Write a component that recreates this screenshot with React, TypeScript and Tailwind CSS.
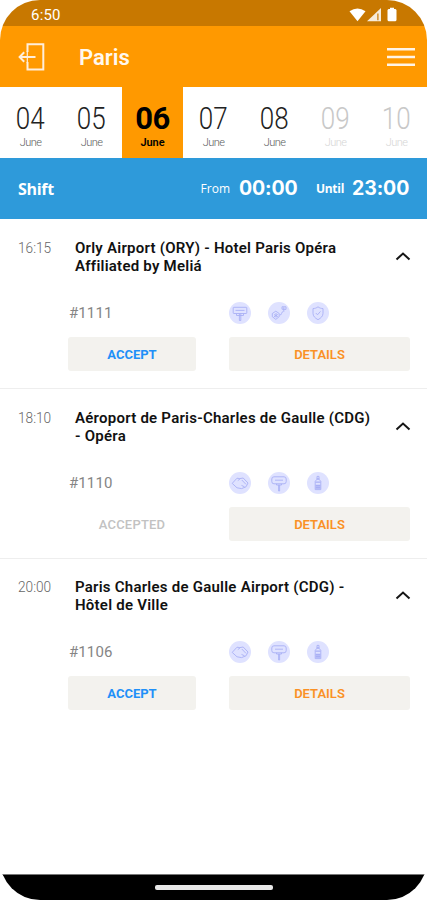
import type { ReactNode } from 'react';

type IconName = 'sign' | 'board' | 'route' | 'shield' | 'handshake' | 'bottle';

const glyphs: Record<IconName, ReactNode> = {
  sign: (
    <>
      <rect x="4.2" y="5.3" width="13.6" height="6.2" rx=".6" />
      <path d="M6.5 8.4h9M7.5 11.5v2h7v-2M10.4 11.5v7h1.4v-7" />
    </>
  ),
  board: (
    <>
      <rect x="3.8" y="4.8" width="14.4" height="7" rx="2.2" />
      <path d="M7 8.2h8M8.5 11.8v1.2h5v-1.2M10.6 13v6h1v-6" />
    </>
  ),
  route: (
    <>
      <path d="M4.3 11.5 7.8 9.2l3.4 2.3v3.2l-3.4 2.7-3.5-2.7zM6 12.5l3.8 2.2M6 14.8l3.8-2.4M8 11v4.5" />
      <path d="M11.8 13c2.8 0 .8-3 3.4-3.4M15.8 9.8V5.2M14 7.2V4.8h4v2.6z" />
    </>
  ),
  shield: (
    <>
      <path d="M11 4.8c1.5 1.2 3.1 1.7 5 1.8v4.7c0 2.8-2 4.8-5 6.4-3-1.6-5-3.6-5-6.4V6.6c1.9-.1 3.5-.6 5-1.8z" />
      <path d="m8.8 11 1.7 1.8 3-3.4" />
    </>
  ),
  handshake: (
    <>
      <path d="M3.2 11.4 8 6.2l2.8.4 3.4-.6 4.8 5-2 3.8-4.4 1.8-4.6-.8z" />
      <path d="m8.8 8.6 2.4-1.8M12.8 8l4.2 4.4M12.5 13.4l3 1.4" />
    </>
  ),
  bottle: (
    <>
      <path d="M10 4.4h2v2.8l1.8 2.2v8.2H8.2V9.4L10 7.2z" />
      <path d="M9.8 7h2.4M8.4 10.2h5.2M8.5 13.4h5M8.5 14.8h5M8.5 16.2h5" strokeWidth="1.3" />
    </>
  ),
};

function Badge({ name }: { name: IconName }) {
  return (
    <svg viewBox="0 0 22 22" className="size-[22px]" fill="none" stroke="#a9b0f5" strokeWidth=".9">
      <circle cx="11" cy="11" r="11" fill="#dfe2ff" stroke="none" />
      {glyphs[name]}
    </svg>
  );
}

function StatusBar() {
  return (
    <div className="flex h-[26px] items-center bg-[#c87800] pl-[31px] pr-[29px] text-white">
      <span className="pt-[4px] text-[15px] leading-[20px] tracking-[0.2px]">6:50</span>
      <svg viewBox="0 0 50 16" className="ml-auto mt-[3px] h-[16px] w-[50px]" fill="#fff">
        <path d="M1.5 4.2Q9.5-1.3 17.5 4.2L9.5 14.2z" />
        <path d="M19 14.2 33 1v13.2z" opacity=".85" />
        <path d="M29.3 6.5h1.2v6.7h-1.2z" fill="#c87800" />
        <path d="M42 2V.8h4V2h1.5l1 1v10.2l-1 1h-7l-1-1V3l1-1z" />
      </svg>
    </div>
  );
}

function Header() {
  return (
    <header className="flex h-[61px] items-center bg-[#ff9900] pl-[18px] pr-[12px]">
      <svg viewBox="0 0 28 30" className="mt-px h-[30px] w-[28px]" fill="none" stroke="#ffeedb" strokeWidth="2">
        <path d="M9.5 10V2.2H25.3v25.3H9.5V20" />
        <path d="M17.5 15H1.8M6.2 10.2 1.6 15l4.6 4.8" />
        <path d="M9.3 9v12" strokeWidth="1.2" />
      </svg>
      <h1 className="ml-[33px] mt-[2px] text-[22px] font-semibold leading-[28px] text-[#fff8ee]">Paris</h1>
      <svg viewBox="0 0 28 20" className="ml-auto h-[20px] w-[28px]" stroke="#fff4e6" strokeWidth="2.6">
        <path d="M0 2.3h28M0 10h28M0 17.7h28" />
      </svg>
    </header>
  );
}

const days = ['04', '05', '06', '07', '08', '09', '10'];

function dayStyle(index: number) {
  if (index === 2) return 'bg-[#ff9900] font-bold text-black';
  if (index > 4) return 'font-light text-[#c8c8c8]';
  return 'font-light text-[#222]';
}

function DateStrip() {
  return (
    <div className="grid h-[71px] grid-cols-7 bg-white">
      {days.map((day, i) => (
        <div key={day} className={`flex flex-col items-center pt-[14px] ${dayStyle(i)}`}>
          <span className={i === 2 ? 'text-[31px] leading-[35px] tracking-[-0.5px]' : 'scale-x-[0.84] text-[31px] leading-[35px]'}>{day}</span>
          <span className={i === 2 ? 'text-[11px] font-semibold leading-[14px] tracking-[-0.1px]' : 'text-[11px] leading-[14px] tracking-[-0.6px] opacity-75'}>June</span>
        </div>
      ))}
    </div>
  );
}

function ShiftBar() {
  return (
    <div className="flex h-[61px] items-center bg-[#2e9ada] pl-[18px] pr-[17px] font-['Open_Sans',sans-serif] text-white">
      <span className="text-[16px] font-bold tracking-[-0.3px]">Shift</span>
      <span className="ml-auto text-[12px] font-medium">From</span>
      <span className="ml-[9px] w-[59px] whitespace-nowrap font-['Inter',sans-serif] text-[19.5px] font-bold tracking-[-0.1px]">00:00</span>
      <span className="ml-[18px] w-[28px] whitespace-nowrap text-[12px] font-bold tracking-[-0.3px]">Until</span>
      <span className="ml-[8px] w-[58px] whitespace-nowrap font-['Inter',sans-serif] text-[19.5px] font-bold tracking-[-0.1px]">23:00</span>
    </div>
  );
}

interface Ride {
  time: string;
  lines: [string, string];
  id: string;
  accepted?: boolean;
  icons: IconName[];
}

const rides: Ride[] = [
  { time: '16:15', lines: ['Orly Airport (ORY) - Hotel Paris Opéra', 'Affiliated by Meliá'], id: '#1111', icons: ['sign', 'route', 'shield'] },
  { time: '18:10', lines: ['Aéroport de Paris-Charles de Gaulle (CDG)', '- Opéra'], id: '#1110', accepted: true, icons: ['handshake', 'board', 'bottle'] },
  { time: '20:00', lines: ['Paris Charles de Gaulle Airport (CDG) -', 'Hôtel de Ville'], id: '#1106', icons: ['handshake', 'board', 'bottle'] },
];

function RideCard({ ride, last }: { ride: Ride; last: boolean }) {
  return (
    <section className={`h-[170px] ${last ? 'pt-[19px]' : 'border-b border-[#eeeeee] pt-[20px]'}`}>
      <div className="flex h-[63px]">
        <time className="w-[75px] pl-[18px] text-[15px] font-light leading-[19px] text-[#666]">
          <span className="inline-block origin-left scale-x-[0.91]">{ride.time}</span>
        </time>
        <h2 className="text-[15px] font-semibold leading-[18px] tracking-[0.24px] text-[#111]">
          {ride.lines[0]}
          <br />
          {ride.lines[1]}
        </h2>
        <svg viewBox="0 0 16 10" className="ml-auto mr-[16px] mt-[12px] h-[10px] w-[16px]" fill="none" stroke="#161616" strokeWidth="2">
          <path d="m1.5 8.5 6.5-6 6.5 6" />
        </svg>
      </div>
      <div className="flex h-[22px] items-center pl-[69px]">
        <span className="w-[160px] pt-px text-[15px] tracking-[0.1px] text-[#858585]">{ride.id}</span>
        <div className="flex gap-[17px]">
          {ride.icons.map((name) => <Badge key={name} name={name} />)}
        </div>
      </div>
      <div className="mt-[13px] flex gap-[33px] pl-[68px] text-[13px]">
        <button disabled={ride.accepted} className={`h-[34px] w-[128px] rounded-[3px] pt-px ${ride.accepted ? 'font-medium tracking-[0.2px] text-[#c2c2c2]' : 'bg-[#f3f2ee] font-bold text-[#1f90f8]'}`}>
          {ride.accepted ? 'ACCEPTED' : 'ACCEPT'}
        </button>
        <button className="h-[34px] w-[181px] rounded-[3px] bg-[#f3f2ee] pt-px font-semibold text-[#fa9125]">DETAILS</button>
      </div>
    </section>
  );
}

export default function App() {
  return (
    <div className="h-[900px] w-[427px] bg-white">
      <div className="flex h-[900px] flex-col overflow-hidden rounded-[40px] bg-white font-['Roboto',sans-serif]">
        <StatusBar />
        <Header />
        <DateStrip />
        <ShiftBar />
        <main className="flex-1">
          {rides.map((ride, i) => <RideCard key={ride.id} ride={ride} last={i === rides.length - 1} />)}
        </main>
        <footer className="flex h-[26px] items-center justify-center border-t border-[#777] bg-black">
          <div className="h-[5px] w-[118px] rounded-[2px] bg-[#e8e8e8]" />
        </footer>
      </div>
    </div>
  );
}
